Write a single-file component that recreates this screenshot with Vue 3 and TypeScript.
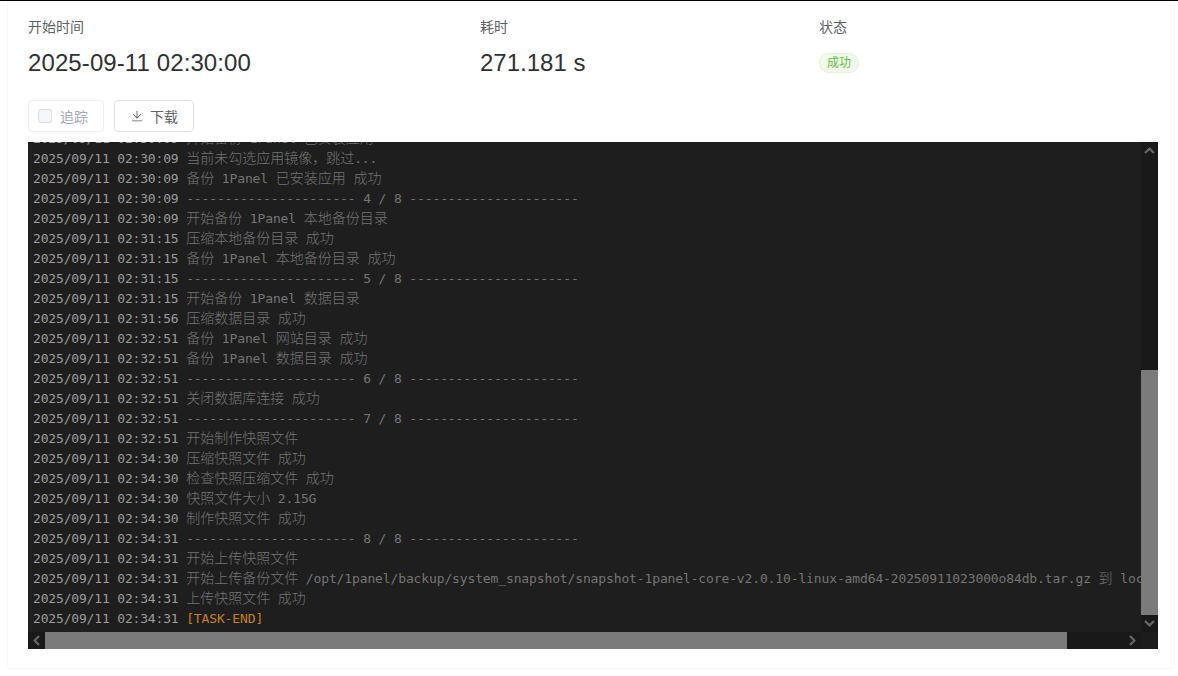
<script setup lang="ts">
interface Run { text: string; cjk: boolean }
interface Row { time: string; runs: Run[]; end: boolean }

const raw: string[] = [
  '2025/09/11 02:30:09|开始备份 1Panel 已安装应用',
  '2025/09/11 02:30:09|当前未勾选应用镜像，跳过...',
  '2025/09/11 02:30:09|备份 1Panel 已安装应用 成功',
  '2025/09/11 02:30:09|---------------------- 4 / 8 ----------------------',
  '2025/09/11 02:30:09|开始备份 1Panel 本地备份目录',
  '2025/09/11 02:31:15|压缩本地备份目录 成功',
  '2025/09/11 02:31:15|备份 1Panel 本地备份目录 成功',
  '2025/09/11 02:31:15|---------------------- 5 / 8 ----------------------',
  '2025/09/11 02:31:15|开始备份 1Panel 数据目录',
  '2025/09/11 02:31:56|压缩数据目录 成功',
  '2025/09/11 02:32:51|备份 1Panel 网站目录 成功',
  '2025/09/11 02:32:51|备份 1Panel 数据目录 成功',
  '2025/09/11 02:32:51|---------------------- 6 / 8 ----------------------',
  '2025/09/11 02:32:51|关闭数据库连接 成功',
  '2025/09/11 02:32:51|---------------------- 7 / 8 ----------------------',
  '2025/09/11 02:32:51|开始制作快照文件',
  '2025/09/11 02:34:30|压缩快照文件 成功',
  '2025/09/11 02:34:30|检查快照压缩文件 成功',
  '2025/09/11 02:34:30|快照文件大小 2.15G',
  '2025/09/11 02:34:30|制作快照文件 成功',
  '2025/09/11 02:34:31|---------------------- 8 / 8 ----------------------',
  '2025/09/11 02:34:31|开始上传快照文件',
  '2025/09/11 02:34:31|开始上传备份文件 /opt/1panel/backup/system_snapshot/snapshot-1panel-core-v2.0.10-linux-amd64-20250911023000o84db.tar.gz 到 local',
  '2025/09/11 02:34:31|上传快照文件 成功',
  '2025/09/11 02:34:31|[TASK-END]',
]

function toRuns(s: string): Run[] {
  const parts = s.match(/[\u3000-\u9fff\uff00-\uffef]+|[^\u3000-\u9fff\uff00-\uffef]+/g) ?? []
  return parts.map((text) => ({ text, cjk: /[\u3000-\u9fff\uff00-\uffef]/.test(text) }))
}

const rows: Row[] = raw.map((line) => {
  const [time, msg] = line.split('|')
  return { time: time + ' ', runs: toRuns(msg), end: msg === '[TASK-END]' }
})
</script>

<template>
  <div class="page">
    <div class="card">
      <div class="stats">
        <div class="stat">
          <div class="label">开始时间</div>
          <div class="value date">2025-09-11 02:30:00</div>
        </div>
        <div class="stat">
          <div class="label">耗时</div>
          <div class="value">271.181 s</div>
        </div>
        <div class="stat">
          <div class="label">状态</div>
          <div class="tag-row"><span class="tag">成功</span></div>
        </div>
      </div>

      <div class="actions">
        <label class="btn disabled"><span class="check"></span>追踪</label>
        <button class="btn" type="button">
          <svg class="dl" viewBox="0 0 1024 1024" width="14" height="14" fill="currentColor">
            <path d="M160 832h704a32 32 0 1 1 0 64H160a32 32 0 1 1 0-64zm384-253.696 236.288-236.352 45.248 45.248L508.8 704 192 387.2l45.248-45.248L480 584.704V128h64v450.304z" />
          </svg>
          下载
        </button>
      </div>

      <div class="term">
        <div class="viewport">
          <div class="lines">
            <div v-for="(row, i) in rows" :key="i" class="line"><span class="time">{{ row.time }}</span><span :class="row.end ? 'end' : 'msg'"><span v-for="(r, j) in row.runs" :key="j" :class="r.cjk ? 'cjk' : 'lat'">{{ r.text }}</span></span></div>
          </div>
        </div>
        <div class="vbar">
          <div class="arrow">
            <svg viewBox="0 0 11 7" width="11" height="7"><path d="M1 6 5.5 1.6 10 6" /></svg>
          </div>
          <div class="vtrack"><div class="vthumb"></div></div>
          <div class="arrow">
            <svg viewBox="0 0 11 7" width="11" height="7"><path d="M1 1 5.5 5.4 10 1" /></svg>
          </div>
        </div>
        <div class="hbar">
          <div class="arrow">
            <svg viewBox="0 0 7 11" width="7" height="11"><path d="M6 1 1.6 5.5 6 10" /></svg>
          </div>
          <div class="htrack"><div class="hthumb"></div></div>
          <div class="arrow">
            <svg viewBox="0 0 7 11" width="7" height="11"><path d="M1 1 5.4 5.5 1 10" /></svg>
          </div>
        </div>
        <div class="corner"></div>
      </div>
    </div>
  </div>
</template>

<style scoped>
.page {
  width: 1178px;
  height: 676px;
  box-sizing: border-box;
  border-top: 1px solid #000;
  padding: 0 3px 7px 7px;
  background: #fff;
  font-family: "Liberation Sans", "Noto Sans CJK SC", sans-serif;
  overflow: hidden;
}
.card {
  height: 100%;
  box-sizing: border-box;
  padding: 0 16px 19px 20px;
  background: #fff;
  border: 1px solid #f6f8fe;
  border-top: none;
  border-radius: 0 0 4px 4px;
  display: flex;
  flex-direction: column;
}
.stats {
  display: grid;
  grid-template-columns: 452px 339px 339px;
  padding-top: 17px;
  height: 99px;
  box-sizing: border-box;
}
.label {
  font-size: 14px;
  line-height: 18px;
  color: #606266;
}
.value {
  margin-top: 10px;
  font-size: 24px;
  line-height: 34px;
  color: #303133;
}
.date {
  letter-spacing: 0.1px;
}
.tag-row {
  margin-top: 17px;
  height: 20px;
  display: flex;
}
.tag {
  box-sizing: border-box;
  width: 40px;
  height: 20px;
  border-radius: 10px;
  border: 1px solid #e1f3d8;
  background: #f0f9eb;
  color: #67c23a;
  font-size: 12px;
  line-height: 18px;
  text-align: center;
}
.actions {
  display: flex;
  gap: 10px;
  height: 42px;
}
.btn {
  box-sizing: border-box;
  height: 32px;
  width: 80px;
  display: flex;
  align-items: center;
  justify-content: center;
  gap: 6px;
  padding: 0;
  border: 1px solid #dcdfe6;
  border-radius: 4px;
  background: #fff;
  color: #606266;
  font-family: inherit;
  font-size: 14px;
}
.btn.disabled {
  width: 76px;
  gap: 8px;
  padding-left: 9px;
  justify-content: flex-start;
  border-color: #ebeef5;
  color: #a8abb2;
}
.check {
  box-sizing: border-box;
  width: 14px;
  height: 14px;
  border: 1px solid #dcdfe6;
  border-radius: 2px;
  background: #f5f7fa;
}
.term {
  width: 1130px;
  height: 507px;
  display: grid;
  grid-template-columns: 1113px 17px;
  grid-template-rows: 490px 17px;
  background: #1e1e1e;
}
.viewport {
  overflow: hidden;
}
.lines {
  margin-top: -13px;
  padding-left: 5px;
}
.line {
  height: 20px;
  line-height: 20px;
  white-space: pre;
  font-family: "DejaVu Sans Mono", "Noto Sans CJK SC", monospace;
  font-size: 13px;
  letter-spacing: -0.13px;
}
.time {
  color: #9c9c9c;
  letter-spacing: -0.17px;
}
.msg {
  color: #757575;
}
.end {
  color: #c5811f;
}
.cjk {
  font-family: "Noto Sans CJK SC", sans-serif;
  font-size: 14px;
  font-weight: 300;
  line-height: 0;
  letter-spacing: 0;
}
.vbar {
  display: flex;
  flex-direction: column;
  background: #191919;
}
.hbar {
  display: flex;
  background: #191919;
}
.arrow {
  flex: none;
  width: 17px;
  height: 17px;
  display: flex;
  align-items: center;
  justify-content: center;
}
.arrow svg {
  fill: none;
  stroke: #666;
  stroke-width: 2.2;
}
.vtrack {
  flex: 1;
  padding-top: 211px;
  box-sizing: border-box;
}
.vthumb {
  height: 245px;
  background: #7b7b7b;
}
.htrack {
  flex: 1;
}
.hthumb {
  width: 1022px;
  height: 17px;
  background: #7b7b7b;
}
.corner {
  background: #1c1c1c;
}
</style>
